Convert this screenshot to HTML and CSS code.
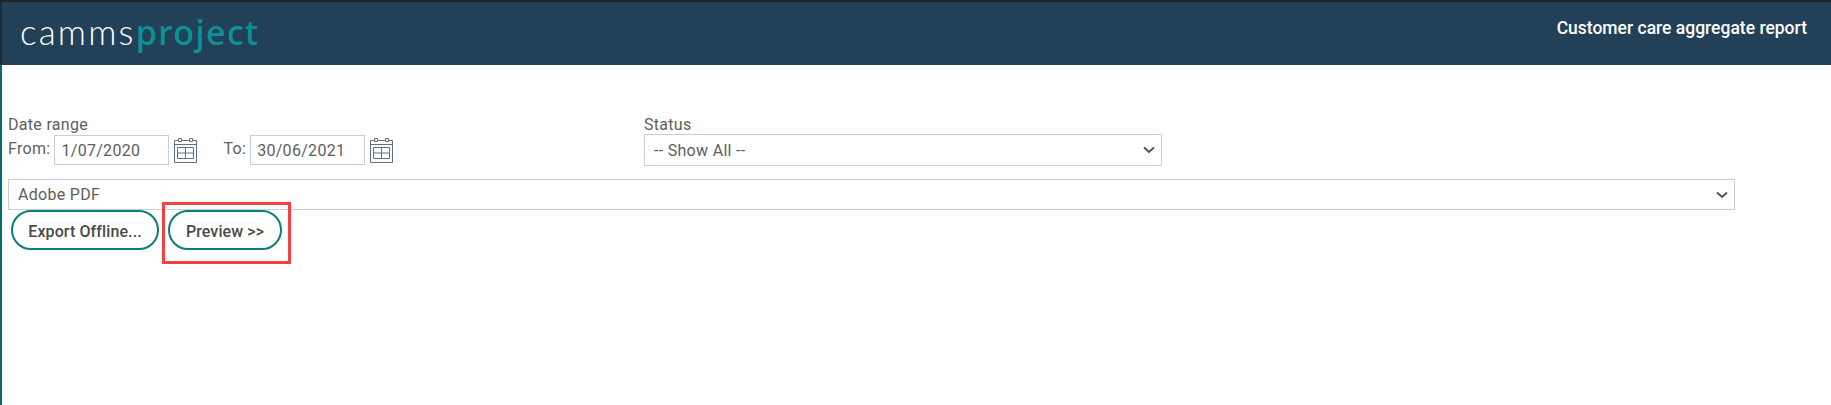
FILE: index.html
```html
<!DOCTYPE html>
<html>
  <head>
    <meta charset="utf-8">
    <link rel="stylesheet" href="styles.css">
  </head>
  <body>
    <div class="header">
      <div class="logo"><span class="logo-light">camms</span><span class="logo-bold">project</span></div>
      <div class="page-title">Customer care aggregate report</div>
    </div>

    <div class="content">
      <div class="filters">
        <div class="date-group">
          <div class="field-label">Date range</div>
          <div class="date-row">
            <label class="date-label">From:</label>
            <input type="text" class="text-input" value="1/07/2020">
            <svg class="cal-icon" width="23" height="25" viewBox="0 0 23 25" fill="none" stroke="#5d7287">
              <path d="M.5 2.5h22v22H.5z"/>
              <path d="M.5 6.5h22"/>
              <path d="M3.5 9.5h16v11h-16zM11.5 9.5v11M3.5 15h16"/>
              <path d="M4.5.5h3v3h-3zM15.5.5h3v3h-3z" fill="#fff"/>
            </svg>
            <label class="date-label to-label">To:</label>
            <input type="text" class="text-input" value="30/06/2021">
            <svg class="cal-icon" width="23" height="25" viewBox="0 0 23 25" fill="none" stroke="#5d7287">
              <path d="M.5 2.5h22v22H.5z"/>
              <path d="M.5 6.5h22"/>
              <path d="M3.5 9.5h16v11h-16zM11.5 9.5v11M3.5 15h16"/>
              <path d="M4.5.5h3v3h-3zM15.5.5h3v3h-3z" fill="#fff"/>
            </svg>
          </div>
        </div>
        <div class="status-group">
          <div class="field-label">Status</div>
          <div class="select-box status-select">
            <span>-- Show All --</span>
            <svg class="chevron" width="12" height="8" viewBox="0 0 12 8" fill="none" stroke="#555" stroke-width="2"><path d="M1 1.5l5 4.5 5-4.5"/></svg>
          </div>
        </div>
      </div>

      <div class="select-box format-select">
        <span>Adobe PDF</span>
        <svg class="chevron" width="12" height="8" viewBox="0 0 12 8" fill="none" stroke="#555" stroke-width="2"><path d="M1 1.5l5 4.5 5-4.5"/></svg>
      </div>

      <div class="actions">
        <button class="btn btn-export">Export Offline...</button>
        <div class="highlight-wrap">
          <button class="btn btn-preview">Preview &gt;&gt;</button>
          <div class="highlight-box"></div>
        </div>
      </div>
    </div>
  </body>
</html>
```

FILE: styles.css
```css
html, body {
  height: 100%;
}
body {
  font-family: Roboto, "Liberation Sans", sans-serif;
  margin: 0;
  padding: 0;
  background-color: white;
  color: #5e5e5e;
  display: flex;
  flex-direction: column;
  overflow: hidden;
}
.header {
  box-sizing: border-box;
  height: 65px;
  flex-shrink: 0;
  background-color: #234059;
  border-top: 2px solid #222;
  border-left: 2px solid #1c2b38;
  display: flex;
  justify-content: space-between;
  padding: 0 24px 0 18px;
}
.logo {
  font-family: Lato, "Noto Sans", sans-serif;
  font-size: 35px;
  line-height: 58px;
  height: 58px;
}
.logo-light {
  color: white;
  font-weight: 300;
  letter-spacing: 2.2px;
}
.logo-bold {
  font-family: "Noto Sans", sans-serif;
  font-size: 34px;
  color: #0a9396;
  font-weight: 500;
  letter-spacing: 1.4px;
}
.page-title {
  color: white;
  font-size: 17.5px;
  font-weight: 500;
  margin-top: 16px;
}
.content {
  flex: 1;
  border-left: 2px solid #056b6b;
  padding: 50px 0 0 6px;
  letter-spacing: .3px;
}
.filters {
  display: flex;
}
.date-group {
  width: 636px;
}
.field-label {
  font-size: 16px;
  line-height: 19px;
  height: 19px;
}
.date-row {
  display: flex;
  align-items: center;
  height: 32px;
}
.date-label {
  font-size: 16px;
  margin-right: 4px;
  position: relative;
  top: -2px;
}
.to-label {
  margin-left: 26px;
}
.text-input {
  box-sizing: border-box;
  width: 115px;
  height: 30px;
  border: 1px solid #c5d0dc;
  padding: 0 6px;
  font-family: inherit;
  font-size: 16px;
  letter-spacing: inherit;
  color: #5e5e5e;
  outline: none;
}
.cal-icon {
  margin-left: 5px;
}
.select-box {
  box-sizing: border-box;
  border: 1px solid #c5d0dc;
  display: flex;
  justify-content: space-between;
  align-items: center;
  font-size: 16px;
  height: 32px;
  padding: 0 6px 0 9px;
}
.status-group {
  width: 518px;
}
.format-select {
  width: 1727px;
  height: 31px;
  margin-top: 13px;
}
.actions {
  display: flex;
  gap: 9px;
  margin-left: 3px;
}
.btn {
  box-sizing: border-box;
  height: 40px;
  background-color: white;
  border: 2px solid #0a7f7a;
  border-radius: 20px;
  color: #4a4a4a;
  font-family: inherit;
  font-size: 16px;
  font-weight: 500;
  letter-spacing: .1px;
  cursor: pointer;
  padding: 2px 0 0;
}
.btn-export {
  width: 148px;
}
.btn-preview {
  width: 114px;
}
.highlight-wrap {
  position: relative;
}
.highlight-box {
  position: absolute;
  left: -6px;
  top: -8px;
  width: 129px;
  height: 62px;
  box-sizing: border-box;
  border: 3px solid #f44040;
}
```
